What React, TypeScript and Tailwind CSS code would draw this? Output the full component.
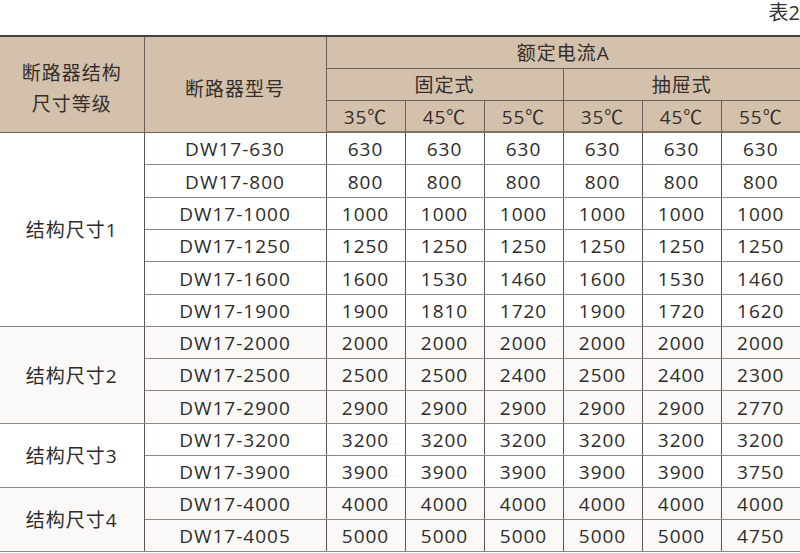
import React from "react";

const rows: { model: string; vals: string[]; h: number }[] = [
  { model: "DW17-630", vals: ["630", "630", "630", "630", "630", "630"], h: 32 },
  { model: "DW17-800", vals: ["800", "800", "800", "800", "800", "800"], h: 33 },
  { model: "DW17-1000", vals: ["1000", "1000", "1000", "1000", "1000", "1000"], h: 32 },
  { model: "DW17-1250", vals: ["1250", "1250", "1250", "1250", "1250", "1250"], h: 32 },
  { model: "DW17-1600", vals: ["1600", "1530", "1460", "1600", "1530", "1460"], h: 33 },
  { model: "DW17-1900", vals: ["1900", "1810", "1720", "1900", "1720", "1620"], h: 32 },
  { model: "DW17-2000", vals: ["2000", "2000", "2000", "2000", "2000", "2000"], h: 32 },
  { model: "DW17-2500", vals: ["2500", "2500", "2400", "2500", "2400", "2300"], h: 32 },
  { model: "DW17-2900", vals: ["2900", "2900", "2900", "2900", "2900", "2770"], h: 33 },
  { model: "DW17-3200", vals: ["3200", "3200", "3200", "3200", "3200", "3200"], h: 32 },
  { model: "DW17-3900", vals: ["3900", "3900", "3900", "3900", "3900", "3750"], h: 32 },
  { model: "DW17-4000", vals: ["4000", "4000", "4000", "4000", "4000", "4000"], h: 32 },
  { model: "DW17-4005", vals: ["5000", "5000", "5000", "5000", "5000", "4750"], h: 32 },
];

const groups: { start: number; span: number; label: string; shaded: boolean }[] = [
  { start: 0, span: 6, label: "结构尺寸1", shaded: false },
  { start: 6, span: 3, label: "结构尺寸2", shaded: true },
  { start: 9, span: 2, label: "结构尺寸3", shaded: false },
  { start: 11, span: 2, label: "结构尺寸4", shaded: true },
];

function groupOf(i: number) {
  return groups.find((g) => i >= g.start && i < g.start + g.span)!;
}

export default function App() {
  const font = { fontFamily: '"Open Sans", "Noto Sans CJK SC", sans-serif' };
  const th =
    "border-x border-y border-[#6b605a] bg-[#d3c1ab] text-center font-normal text-[19px] leading-none text-[#332e2b] pt-[3px] p-0 tracking-[1px]";
  const td =
    "border-y border-y-[#8d8782] border-x border-x-[#5c5553] text-center text-[19px] leading-none text-[#2e2b2a] pt-[3px] p-0 tracking-[1px]";
  return (
    <div className="w-[800px] h-[553px] bg-white overflow-hidden" style={font}>
      <div className="h-[35px] flex justify-end items-start pt-[3px] text-[20px] leading-none text-[#333]">
        表2
      </div>
      <table className="w-[800px] table-fixed border-collapse border-t-2 border-t-[#4a4240]">
        <colgroup>
          <col className="w-[144px]" />
          <col className="w-[182px]" />
          <col className="w-[79px]" />
          <col className="w-[79px]" />
          <col className="w-[79px]" />
          <col className="w-[79px]" />
          <col className="w-[79px]" />
          <col className="w-[79px]" />
        </colgroup>
        <thead>
          <tr className="h-[32px]">
            <th rowSpan={3} className={`${th} border-l-0 pt-[10px]`}>
              <div className="leading-[31px]">
                断路器结构
                <br />
                尺寸等级
              </div>
            </th>
            <th rowSpan={3} className={`${th} pt-[10px]`}>
              断路器型号
            </th>
            <th colSpan={6} className={`${th} border-r-0`}>
              额定电流A
            </th>
          </tr>
          <tr className="h-[32px]">
            <th colSpan={3} className={th}>
              固定式
            </th>
            <th colSpan={3} className={`${th} border-r-0`}>
              抽屉式
            </th>
          </tr>
          <tr className="h-[32px]">
            {["35℃", "45℃", "55℃", "35℃", "45℃"].map((t, i) => (
              <th key={i} className={`${th} border-b-2 border-b-[#7d6f66]`}>
                {t}
              </th>
            ))}
            <th className={`${th} border-b-2 border-b-[#7d6f66] border-r-0`}>55℃</th>
          </tr>
        </thead>
        <tbody>
          {rows.map((r, i) => {
            const g = groupOf(i);
            const bg = g.shaded ? "bg-[#faf9f7]" : "bg-white";
            return (
              <tr key={r.model} className={bg} style={{ height: r.h }}>
                {i === g.start && (
                  <td rowSpan={g.span} className={`${td} border-l-0`}>
                    {g.label}
                  </td>
                )}
                <td className={td}>{r.model}</td>
                {r.vals.map((v, j) => (
                  <td key={j} className={`${td} ${j === 5 ? "border-r-0" : ""}`}>
                    {v}
                  </td>
                ))}
              </tr>
            );
          })}
        </tbody>
      </table>
    </div>
  );
}
